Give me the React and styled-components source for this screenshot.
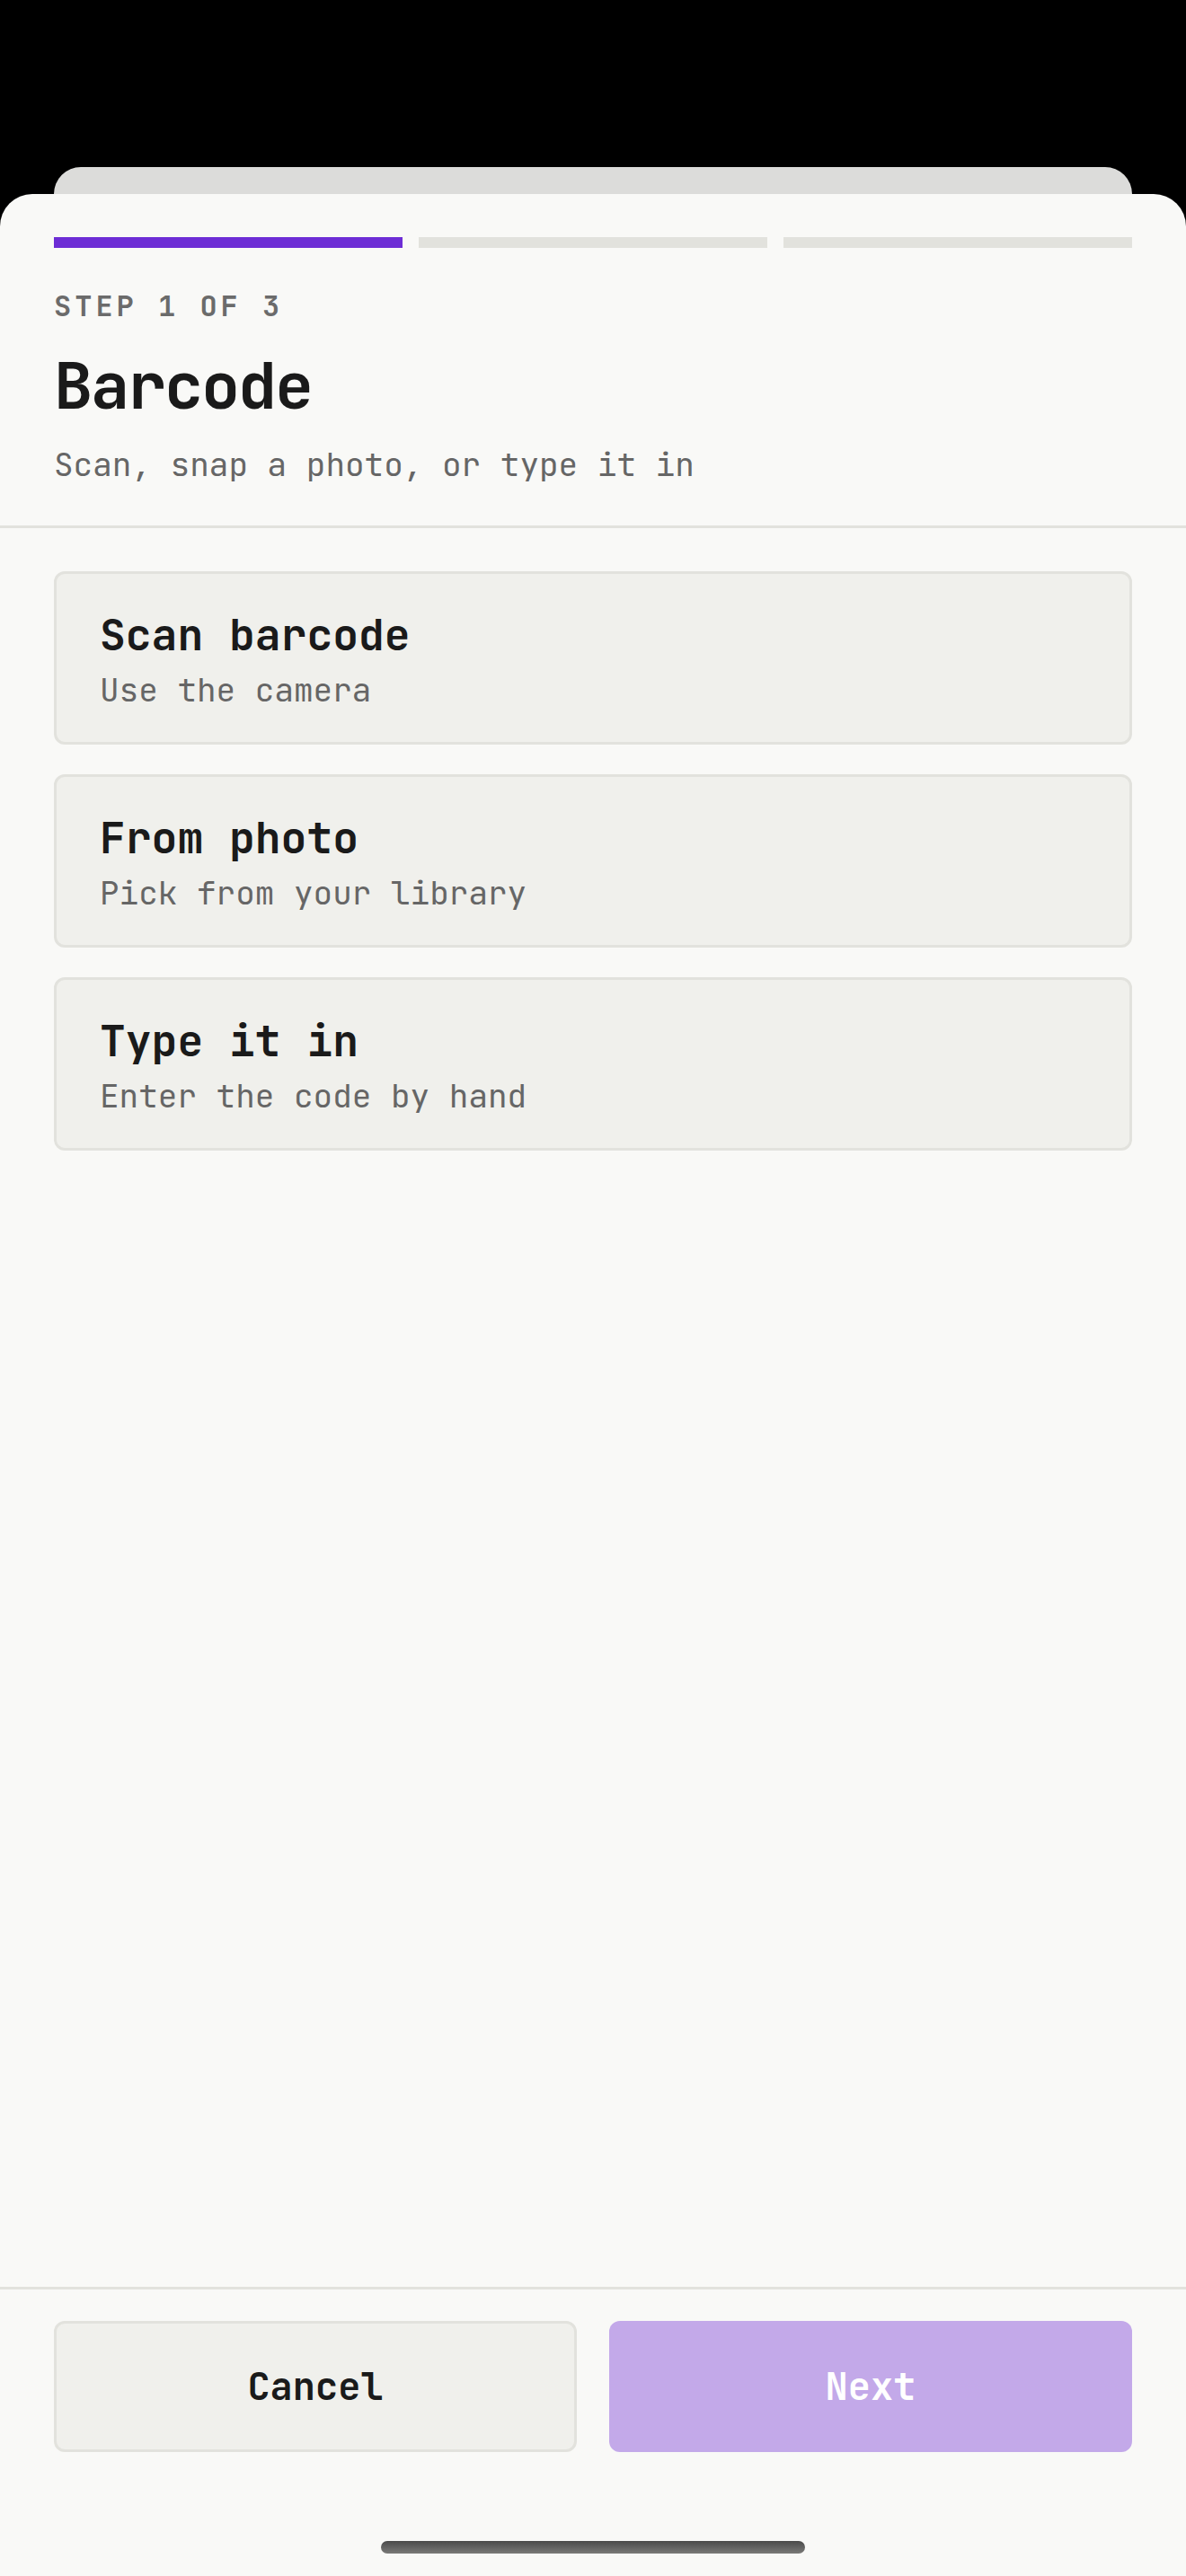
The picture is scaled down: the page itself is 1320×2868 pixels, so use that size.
import React from "react";
import styled, { createGlobalStyle } from "styled-components";

const GlobalStyle = createGlobalStyle`
  html, body {
    margin: 0;
    padding: 0;
    background: #000000;
  }
  * { box-sizing: border-box; }
  body {
    font-family: "JetBrains Mono", "DejaVu Sans Mono", "Liberation Mono", monospace;
    -webkit-font-smoothing: antialiased;
  }
`;

const mono = `"JetBrains Mono", "DejaVu Sans Mono", "Liberation Mono", monospace`;

const Screen = styled.div`
  width: 1320px;
  height: 2868px;
  background: #000000;
  padding-top: 186px;
  display: flex;
  flex-direction: column;
  overflow: hidden;
`;

const BackCard = styled.div`
  height: 30px;
  margin: 0 60px;
  background: #dcdcda;
  border-radius: 30px 30px 0 0;
  flex-shrink: 0;
`;

const Sheet = styled.div`
  flex: 1;
  background: #f9f9f7;
  border-radius: 36px 36px 0 0;
  display: flex;
  flex-direction: column;
  min-height: 0;
`;

const Header = styled.header`
  padding: 48px 60px 46px;
  border-bottom: 3px solid #e2e2dd;
  display: flex;
  flex-direction: column;
`;

const Progress = styled.div`
  display: grid;
  grid-template-columns: repeat(3, 1fr);
  gap: 18px;
`;

const Segment = styled.div`
  height: 12px;
  background: ${(p) => (p.$active ? "#6d2dd5" : "#e2e2dd")};
`;

const StepLabel = styled.div`
  margin-top: 45px;
  font-family: ${mono};
  font-size: 32px;
  line-height: 40px;
  letter-spacing: 4px;
  font-weight: 700;
  color: #6b6b6b;
  text-transform: uppercase;
`;

const Title = styled.h1`
  margin: 27px 0 0;
  font-family: ${mono};
  font-size: 72px;
  line-height: 84px;
  letter-spacing: -2.2px;
  font-weight: 700;
  color: #1a1a1a;
`;

const Subtitle = styled.p`
  margin: 23px 0 0;
  font-family: ${mono};
  font-size: 36px;
  line-height: 44px;
  font-weight: 400;
  color: #666666;
`;

const OptionList = styled.div`
  flex: 1;
  padding: 48px 60px;
  display: flex;
  flex-direction: column;
  gap: 33px;
`;

const OptionCard = styled.button`
  all: unset;
  box-sizing: border-box;
  display: flex;
  flex-direction: column;
  gap: 11px;
  padding: 40px 48px 36px;
  background: #f0f0ec;
  border: 3px solid #e2e2dd;
  border-radius: 12px;
  cursor: pointer;
`;

const OptionTitle = styled.div`
  font-family: ${mono};
  font-size: 48px;
  line-height: 56px;
  font-weight: 700;
  color: #1a1a1a;
`;

const OptionHint = styled.div`
  font-family: ${mono};
  font-size: 36px;
  line-height: 44px;
  font-weight: 400;
  color: #666666;
`;

const Footer = styled.footer`
  border-top: 3px solid #e2e2dd;
  padding: 35px 60px 25px;
  display: flex;
  flex-direction: column;
  align-items: center;
`;

const ButtonRow = styled.div`
  width: 100%;
  display: grid;
  grid-template-columns: 1fr 1fr;
  gap: 36px;
`;

const Button = styled.button`
  height: 146px;
  border-radius: 12px;
  font-family: ${mono};
  font-size: 42px;
  font-weight: 700;
  display: flex;
  align-items: center;
  justify-content: center;
  cursor: pointer;
  border: ${(p) => (p.$primary ? "none" : "3px solid #e2e2dd")};
  background: ${(p) => (p.$primary ? "#c3a9e9" : "#f0f0ec")};
  color: ${(p) => (p.$primary ? "#ffffff" : "#1a1a1a")};
`;

const HomeIndicator = styled.div`
  margin-top: 99px;
  width: 472px;
  height: 14px;
  border-radius: 7px;
  background: linear-gradient(180deg, #4a4a4a 0%, #7a7a78 100%);
`;

const options = [
  { title: "Scan barcode", hint: "Use the camera" },
  { title: "From photo", hint: "Pick from your library" },
  { title: "Type it in", hint: "Enter the code by hand" },
];

export default function App() {
  return (
    <>
      <GlobalStyle />
      <Screen>
        <BackCard />
        <Sheet>
          <Header>
            <Progress>
              <Segment $active />
              <Segment />
              <Segment />
            </Progress>
            <StepLabel>Step 1 of 3</StepLabel>
            <Title>Barcode</Title>
            <Subtitle>Scan, snap a photo, or type it in</Subtitle>
          </Header>
          <OptionList>
            {options.map((o) => (
              <OptionCard key={o.title}>
                <OptionTitle>{o.title}</OptionTitle>
                <OptionHint>{o.hint}</OptionHint>
              </OptionCard>
            ))}
          </OptionList>
          <Footer>
            <ButtonRow>
              <Button>Cancel</Button>
              <Button $primary>Next</Button>
            </ButtonRow>
            <HomeIndicator />
          </Footer>
        </Sheet>
      </Screen>
    </>
  );
}
